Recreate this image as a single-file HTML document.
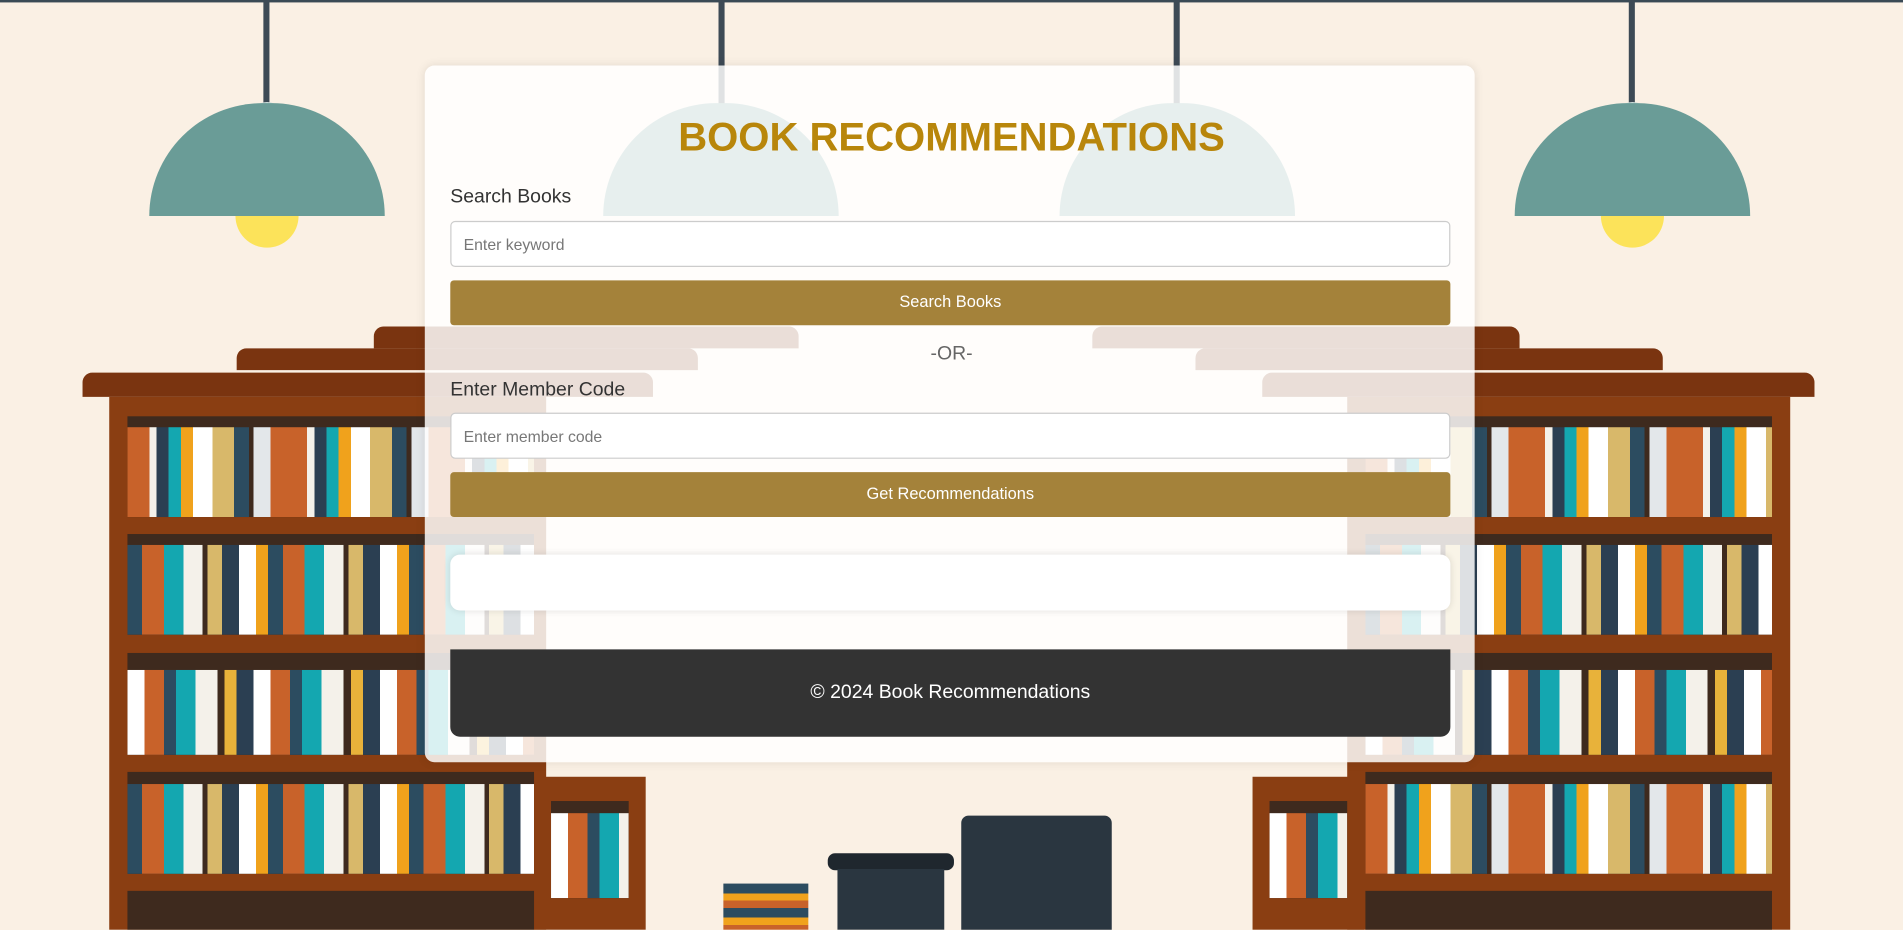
<!DOCTYPE html>
<html><head><meta charset="utf-8"><style>
html,body{margin:0;padding:0;width:1903px;height:930px;overflow:hidden;background:#faf0e4;font-family:"Liberation Sans",sans-serif}
#s{position:absolute;left:0;top:0;width:1568px;height:766px;transform:scale(1.2137);transform-origin:0 0;background:#faf0e4}
.a{position:absolute}
.cord{width:5px;background:#3d4a55;top:0}
.dome{width:194px;height:93px;background:#6a9c97;border-radius:97px 97px 0 0}
.bulb{width:52px;height:52px;border-radius:50%;background:#fce35a}
.cap{width:30px;height:20px;border-radius:15px 15px 0 0;background:#cfe0dd}
.frame{background:#8a3e12}
.corn{background:#7a3410;border-radius:8px 8px 0 0}
.row{background:#3e2a1e;overflow:hidden}
.books{position:absolute;left:0;right:0;bottom:0}
.b1{height:74px;background:repeating-linear-gradient(90deg,#c8622a 0 18px,#f4f1ea 18px 24px,#2b3f52 24px 34px,#14a7b0 34px 44px,#f0a21c 44px 54px,#fff 54px 70px,#d8b86a 70px 88px,#2c4c60 88px 100px,#3e2a1e 100px 104px,#e3e7ea 104px 118px,#c8622a 118px 130px)}
.b2{height:74px;background:repeating-linear-gradient(90deg,#2c4c60 0 12px,#c8622a 12px 30px,#14a7b0 30px 46px,#f4f1ea 46px 62px,#3e2a1e 62px 66px,#d8b86a 66px 78px,#2b3f52 78px 92px,#fff 92px 106px,#f0a21c 106px 116px)}
.b3{height:70px;background:repeating-linear-gradient(90deg,#fff 0 14px,#c8622a 14px 30px,#2c4c60 30px 40px,#14a7b0 40px 56px,#f4f1ea 56px 74px,#3e2a1e 74px 80px,#e8b23a 80px 90px,#2b3f52 90px 104px)}
.card{left:350px;top:54px;width:865px;height:574px;background:rgba(255,255,255,.84);border-radius:8px;box-shadow:0 0 8px rgba(0,0,0,.1)}
h1{position:absolute;left:0;right:0;top:94px;margin:0;text-align:center;font-size:33px;font-weight:bold;color:#b8860b}
.lbl{left:371px;font-size:16px;color:#333}
.inp{left:371px;width:824px;height:38px;border:1px solid #ccc;border-radius:4px;background:#fff;font-size:13px;color:#777;box-sizing:border-box;padding:11px 10px}
.btn{left:371px;width:824px;height:37px;background:#a4823a;border-radius:3px;color:#fff;font-size:13.5px;text-align:center;line-height:36px}
</style></head><body><div id="s">
<div class="a" style="left:0;top:0;width:1568px;height:2px;background:#3a4a55"></div>
<div class="a cord" style="left:217px;height:90px"></div><div class="a cap" style="left:205px;top:84px"></div><div class="a bulb" style="left:194px;top:152px"></div><div class="a dome" style="left:123px;top:85px"></div>
<div class="a cord" style="left:1342px;height:90px"></div><div class="a cap" style="left:1330px;top:84px"></div><div class="a bulb" style="left:1319px;top:152px"></div><div class="a dome" style="left:1248px;top:85px"></div>
<div class="a cord" style="left:592px;height:90px"></div><div class="a dome" style="left:497px;top:85px"></div>
<div class="a cord" style="left:967px;height:90px"></div><div class="a dome" style="left:873px;top:85px"></div>
<div class="a corn" style="left:308px;top:269px;width:350px;height:18px"></div>
<div class="a corn" style="left:195px;top:287px;width:380px;height:18px"></div>
<div class="a corn" style="left:68px;top:307px;width:470px;height:20px"></div>
<div class="a frame" style="left:90px;top:327px;width:360px;height:439px"></div>
<div class="a frame" style="left:440px;top:640px;width:92px;height:126px"></div>
<div class="a row" style="left:105px;top:343px;width:335px;height:83px"><div class="books b1"></div></div>
<div class="a row" style="left:105px;top:440px;width:335px;height:83px"><div class="books b2"></div></div>
<div class="a row" style="left:105px;top:538px;width:335px;height:84px"><div class="books b3"></div></div>
<div class="a row" style="left:105px;top:636px;width:335px;height:84px"><div class="books b2"></div></div>
<div class="a row" style="left:105px;top:734px;width:335px;height:32px"></div>
<div class="a row" style="left:454px;top:660px;width:64px;height:80px"><div class="books b3"></div></div>
<div class="a corn" style="left:900px;top:269px;width:352px;height:18px"></div>
<div class="a corn" style="left:985px;top:287px;width:385px;height:18px"></div>
<div class="a corn" style="left:1040px;top:307px;width:455px;height:20px"></div>
<div class="a frame" style="left:1110px;top:327px;width:365px;height:439px"></div>
<div class="a frame" style="left:1032px;top:640px;width:92px;height:126px"></div>
<div class="a row" style="left:1125px;top:343px;width:335px;height:83px"><div class="books b1"></div></div>
<div class="a row" style="left:1125px;top:440px;width:335px;height:83px"><div class="books b2"></div></div>
<div class="a row" style="left:1125px;top:538px;width:335px;height:84px"><div class="books b3"></div></div>
<div class="a row" style="left:1125px;top:636px;width:335px;height:84px"><div class="books b1"></div></div>
<div class="a row" style="left:1125px;top:734px;width:335px;height:32px"></div>
<div class="a row" style="left:1046px;top:660px;width:64px;height:80px"><div class="books b3"></div></div>
<div class="a" style="left:792px;top:672px;width:124px;height:94px;background:#2a3640;border-radius:6px 6px 0 0"></div>
<div class="a" style="left:682px;top:703px;width:104px;height:14px;background:#1f272e;border-radius:6px"></div>
<div class="a" style="left:690px;top:716px;width:88px;height:50px;background:#2a3640"></div>
<div class="a" style="left:596px;top:728px;width:70px;height:38px;background:repeating-linear-gradient(180deg,#2c4c60 0 8px,#f0a21c 8px 14px,#c8622a 14px 20px)"></div>
<div class="a card"></div>
<h1>BOOK RECOMMENDATIONS</h1>
<div class="a lbl" style="top:154px">Search Books</div>
<div class="a inp" style="top:182px">Enter keyword</div>
<div class="a btn" style="top:231px">Search Books</div>
<div class="a" style="left:0;width:1568px;text-align:center;top:283px;font-size:16px;color:#666">-OR-</div>
<div class="a lbl" style="top:313px">Enter Member Code</div>
<div class="a inp" style="top:340px">Enter member code</div>
<div class="a btn" style="top:389px">Get Recommendations</div>
<div class="a" style="left:371px;top:457px;width:824px;height:46px;background:#fff;border-radius:8px;box-shadow:0 0 6px rgba(0,0,0,.12)"></div>
<div class="a" style="left:371px;top:535px;width:824px;height:72px;background:#333;border-radius:0 0 8px 8px;color:#fff;font-size:16px;text-align:center;line-height:72px">© 2024 Book Recommendations</div>
</div></body></html>
